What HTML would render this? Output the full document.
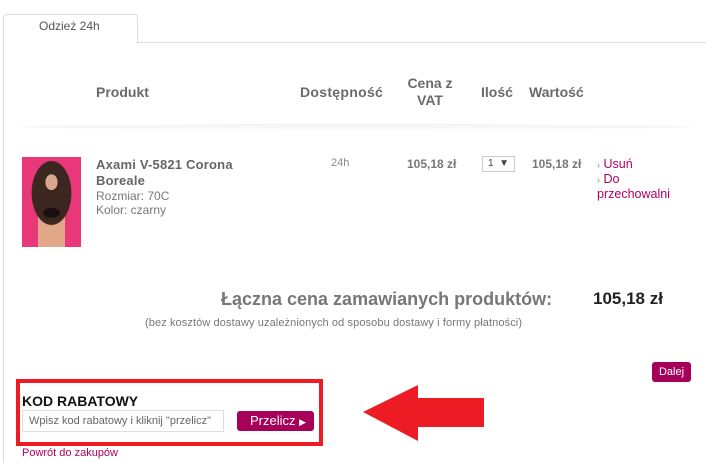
<!DOCTYPE html>
<html><head><meta charset="utf-8"><style>
*{margin:0;padding:0;box-sizing:border-box}
body{width:706px;height:463px;background:#fff;font-family:"Liberation Sans",Arial,sans-serif;position:relative;overflow:hidden;color:#666}
.a{position:absolute;white-space:nowrap}
.h{font-weight:bold;font-size:14px;color:#6a6a6a}
.m{color:#b0005f}
</style></head><body>
<div class="a" style="left:3px;top:14px;width:135px;height:30px;border:1px solid #ddd;border-bottom:none;border-radius:4px 4px 0 0;background:#fff;z-index:2"></div>
<div class="a" style="left:39px;top:19px;font-size:12px;color:#555;z-index:3">Odzież 24h</div>
<div class="a" style="left:137px;top:42px;width:569px;border-top:1px solid #ddd"></div>
<div class="a" style="left:3px;top:43px;height:420px;border-left:1px solid #ddd"></div>

<div class="a h" style="left:96px;top:84px">Produkt</div>
<div class="a h" style="left:300px;top:84px;letter-spacing:0.3px">Dostępność</div>
<div class="a h" style="left:403px;top:75px;text-align:center;width:54px;line-height:17px">Cena z<br>VAT</div>
<div class="a h" style="left:481px;top:84px">Ilość</div>
<div class="a h" style="left:529px;top:84px">Wartość</div>
<div class="a" style="left:20px;top:124px;width:672px;height:6px;background:linear-gradient(#ddd,#fff 1px,#f3f3f3 2px,#fff);border-radius:50%"></div>

<div class="a" style="left:22px;top:157px;width:59px;height:90px;background:
radial-gradient(ellipse 14px 8px at 50% 62%,#1a1010 60%,transparent 62%),
radial-gradient(ellipse 10px 13px at 50% 28%,#d9a78e 60%,transparent 62%),
radial-gradient(ellipse 28px 45px at 50% 40%,#3b2620 70%,transparent 72%),
linear-gradient(#e0a888 0,#e0a888 100%) 16px 45px/27px 45px no-repeat,
#e8387a"></div>

<div class="a" style="left:96px;top:157px;font-size:13px;font-weight:bold;color:#666;line-height:16px;letter-spacing:0.2px">Axami V-5821 Corona<br>Boreale</div>
<div class="a" style="left:96px;top:189px;font-size:12px;color:#777;line-height:14px">Rozmiar: 70C<br>Kolor: czarny</div>
<div class="a" style="left:331px;top:157px;font-size:11px;color:#888">24h</div>
<div class="a" style="left:407px;top:157px;font-size:12px;font-weight:bold;color:#777">105,18 zł</div>
<div class="a" style="left:482px;top:156px;width:33px;height:16px;border:1px solid #ccc;font-size:10px;color:#444;padding:1px 0 0 5px">1 &nbsp;▼</div>
<div class="a" style="left:532px;top:157px;font-size:12px;font-weight:bold;color:#777">105,18 zł</div>
<div class="a m" style="left:597px;top:157px;font-size:12.5px;line-height:14px"><span style="color:#9a8a5a;font-size:9px">›</span> Usuń<br><span style="color:#9a8a5a;font-size:9px">›</span> Do<br>przechowalni</div>

<div class="a" style="left:221px;top:289px;font-size:18px;font-weight:bold;color:#777">Łączna cena zamawianych produktów:</div>
<div class="a" style="left:593px;top:289px;font-size:17px;font-weight:bold;color:#222">105,18 zł</div>
<div class="a" style="left:145px;top:317px;font-size:11px;color:#777;letter-spacing:0.1px">(bez kosztów dostawy uzależnionych od sposobu dostawy i formy płatności)</div>

<div class="a" style="left:652px;top:362px;width:39px;height:20px;background:#a6005a;border-radius:3px;color:#fff;font-size:11px;text-align:center;line-height:20px">Dalej</div>

<div class="a" style="left:16px;top:379px;width:307px;height:67px;border:4px solid #ed1c24"></div>
<div class="a" style="left:22px;top:393px;font-size:14px;font-weight:bold;color:#111">KOD RABATOWY</div>
<div class="a" style="left:22px;top:410px;width:202px;height:22px;border:1px solid #ddd;font-size:11px;color:#666;padding:4px 0 0 6px">Wpisz kod rabatowy i kliknij "przelicz"</div>
<div class="a" style="left:237px;top:411px;width:77px;height:20px;background:#a6005a;border-radius:3px;color:#fff;font-size:13px;line-height:20px;padding-left:13px">Przelicz <span style="font-size:9px">▶</span></div>
<div class="a m" style="left:22px;top:447px;font-size:11px">Powrót do zakupów</div>

<svg class="a" style="left:360px;top:383px" width="130" height="62"><polygon points="3,29 58,2 58,15 124,15 124,44 58,44 58,58" fill="#ed1c24"/></svg>
</body></html>
